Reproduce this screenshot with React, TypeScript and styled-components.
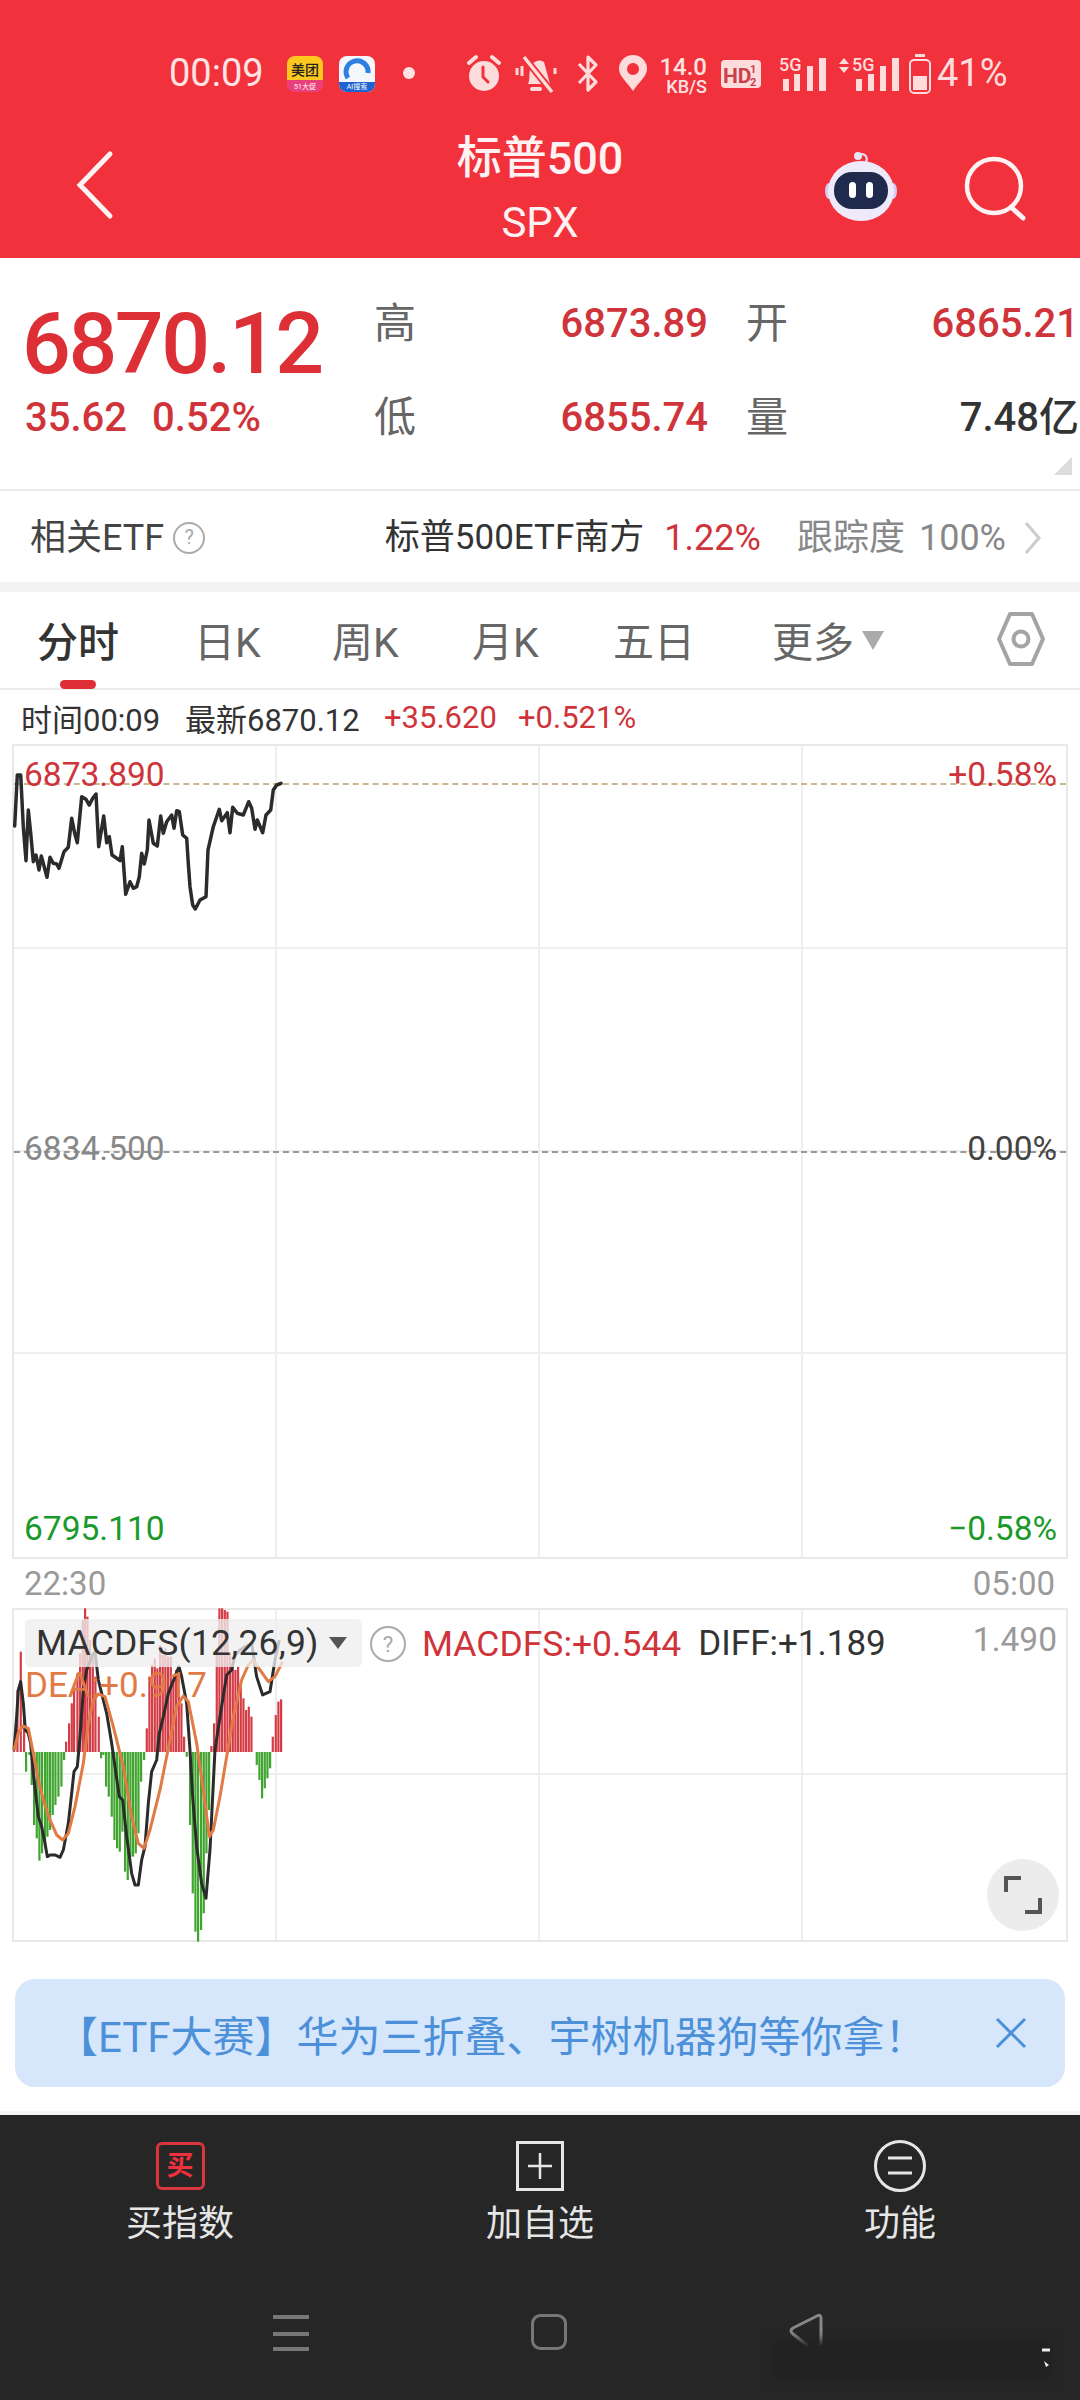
import React from "react";
import styled, { createGlobalStyle } from "styled-components";

const FONT = `Roboto, "Noto Sans CJK SC", sans-serif`;
const RED = "#d0343b";

const Global = createGlobalStyle`
  html, body { margin: 0; padding: 0; background: #fff; }
  body { font-family: ${FONT}; }
  * { box-sizing: border-box; }
`;

const Page = styled.div`
  width: 1080px;
  height: 2400px;
  overflow: hidden;
  display: flex;
  flex-direction: column;
  background: #fff;
  color: #333;
`;

/* ---------- header ---------- */
const Header = styled.header`
  height: 258px;
  background: #f1313b;
  display: flex;
  flex-direction: column;
  flex: none;
`;
const StatusBar = styled.div`
  height: 130px;
  padding: 54px 0 0 169px;
  display: flex;
  align-items: flex-start;
  color: #ffe3e3;
`;
const Clock = styled.span`
  font-size: 38px;
  line-height: 38px;
  width: 118px;
  flex: none;
`;
const Slot = styled.span<{ $w: number; $ml?: number }>`
  display: block;
  flex: none;
  width: ${(p) => p.$w}px;
  margin-left: ${(p) => p.$ml ?? 0}px;
  height: 40px;
  position: relative;
`;
const AppTile = styled.div<{ $bg: string }>`
  width: 36px;
  height: 36px;
  margin-top: 2px;
  border-radius: 8px;
  overflow: hidden;
  background: ${(p) => p.$bg};
  display: flex;
  flex-direction: column;
  align-items: center;
  position: relative;
`;
const TileTop = styled.span`
  font-size: 14px;
  line-height: 15px;
  margin-top: 7px;
  font-weight: 500;
  color: #222;
  white-space: nowrap;
`;
const TileBottom = styled.span<{ $bg: string }>`
  position: absolute;
  left: 0;
  right: 0;
  bottom: 0;
  height: 10px;
  background: ${(p) => p.$bg};
  color: #fff;
  font-size: 7px;
  line-height: 10px;
  text-align: center;
  white-space: nowrap;
`;
const Speed = styled.div`
  display: flex;
  flex-direction: column;
  align-items: flex-end;
  width: 46px;
  flex: none;
  margin-left: 14px;
  padding-top: 2px;
  color: #ffe3e3;
  font-weight: 500;
`;
const SpeedTop = styled.span`
  font-size: 24px;
  line-height: 22px;
`;
const SpeedBottom = styled.span`
  font-size: 18px;
  line-height: 17px;
  white-space: nowrap;
`;
const Battery = styled.span`
  font-size: 38px;
  line-height: 38px;
  margin-left: 6px;
  flex: none;
  color: #ffdcdc;
`;
const NavBar = styled.div`
  height: 128px;
  position: relative;
  display: flex;
  flex-direction: column;
  align-items: center;
  color: #fff2f2;
`;
const NavTitle = styled.div`
  font-size: 45px;
  line-height: 60px;
  margin-top: -1px;
  font-weight: 500;
`;
const NavSub = styled.div`
  font-size: 42px;
  line-height: 50px;
  margin-top: 9px;
`;
const NavIcon = styled.svg<{ $x: number; $y: number }>`
  position: absolute;
  left: ${(p) => p.$x}px;
  top: ${(p) => p.$y}px;
`;

/* ---------- stats ---------- */
const Stats = styled.section`
  height: 233px;
  flex: none;
  border-bottom: 2px solid #ececec;
  display: grid;
  grid-template-columns: 349px 147px 187px 79px 1fr;
  grid-template-rows: 94px 94px;
  padding: 19px 1px 0 25px;
  position: relative;
`;
const BigPrice = styled.div`
  font-size: 86px;
  line-height: 94px;
  margin: 20px 0 -20px -3px;
  font-weight: 500;
  color: #dc2f36;
  letter-spacing: -2.5px;
  white-space: nowrap;
`;
const Change = styled.div`
  font-size: 40px;
  line-height: 94px;
  font-weight: 500;
  color: ${RED};
  display: flex;
  gap: 25px;
`;
const StatKey = styled.div<{ $inset?: number }>`
  font-size: 42px;
  line-height: 94px;
  color: #666;
  padding-left: ${(p) => p.$inset ?? 0}px;
`;
const StatValue = styled.div<{ $dark?: boolean }>`
  font-size: 40px;
  line-height: 94px;
  font-weight: 500;
  color: ${(p) => (p.$dark ? "#333" : RED)};
  text-align: right;
  white-space: nowrap;
`;
const Corner = styled.div`
  position: absolute;
  right: 8px;
  bottom: 14px;
  width: 0;
  height: 0;
  border-left: 18px solid transparent;
  border-bottom: 18px solid #dcdcdc;
`;

/* ---------- ETF row ---------- */
const EtfRow = styled.section`
  height: 91px;
  flex: none;
  display: flex;
  align-items: center;
  padding: 2px 37px 0 30px;
  font-size: 36px;
  line-height: 44px;
  color: #444;
`;
const Help = styled.span<{ $size: number }>`
  width: ${(p) => p.$size}px;
  height: ${(p) => p.$size}px;
  border: 2px solid #aaa;
  border-radius: 50%;
  color: #aaa;
  font-size: ${(p) => p.$size * 0.62}px;
  line-height: ${(p) => p.$size - 4}px;
  text-align: center;
  flex: none;
`;
const EtfHelp = styled(Help)`
  margin-left: 9px;
`;
const EtfName = styled.span`
  margin-left: auto;
  color: #333;
  font-size: 35px;
  line-height: 44px;
`;
const EtfPct = styled.span`
  margin-left: 20px;
  color: ${RED};
  line-height: 44px;
`;
const EtfTrack = styled.span`
  margin-left: 36px;
  color: #888;
  display: flex;
  align-items: baseline;
  gap: 14px;
  line-height: 44px;
`;
const Chevron = styled.svg`
  margin-left: 17px;
  flex: none;
`;
const Band = styled.div`
  height: 10px;
  flex: none;
  background: #f4f4f4;
`;

/* ---------- tabs ---------- */
const Tabs = styled.nav`
  height: 98px;
  flex: none;
  border-bottom: 2px solid #ececec;
  position: relative;
  display: flex;
  align-items: flex-start;
  padding-top: 26px;
  padding-left: 37px;
`;
const Tab = styled.div<{ $active?: boolean; $w: number }>`
  width: ${(p) => p.$w}px;
  flex: none;
  font-size: 41px;
  line-height: 50px;
  color: ${(p) => (p.$active ? "#333" : "#666")};
  font-weight: ${(p) => (p.$active ? 500 : 400)};
  position: relative;
  white-space: nowrap;
  display: flex;
  align-items: center;
  &::after {
    content: "";
    display: ${(p) => (p.$active ? "block" : "none")};
    position: absolute;
    left: 23px;
    top: 62px;
    width: 36px;
    height: 9px;
    border-radius: 5px;
    background: #e12f38;
  }
`;
const MoreCaret = styled.span`
  width: 0;
  height: 0;
  margin-left: 8px;
  margin-top: -6px;
  border-left: 11px solid transparent;
  border-right: 11px solid transparent;
  border-top: 19px solid #aaa;
`;
const Gear = styled.svg`
  position: absolute;
  left: 996px;
  top: 17px;
`;

const InfoRow = styled.div`
  height: 54px;
  flex: none;
  display: flex;
  align-items: center;
  font-size: 31px;
  padding-left: 21px;
  color: #333;
  white-space: nowrap;
`;
const InfoItem = styled.span<{ $w: number; $red?: boolean }>`
  width: ${(p) => p.$w}px;
  flex: none;
  color: ${(p) => (p.$red ? RED : "#333")};
`;

/* ---------- charts ---------- */
const Chart = styled.div<{ $rows: number; $h: number }>`
  margin-left: 12px;
  width: 1056px;
  height: ${(p) => p.$h}px;
  flex: none;
  position: relative;
  border: 2px solid #e8e8e8;
  display: grid;
  grid-template-columns: repeat(4, 1fr);
  grid-template-rows: repeat(${(p) => p.$rows}, 1fr);
`;
const Cell = styled.div<{ $last?: boolean }>`
  border-right: 2px solid #eee;
  border-bottom: ${(p) => (p.$last ? "0" : "2px solid #eee")};
  &:nth-child(4n) { border-right: 0; }
`;
const Overlay = styled.svg`
  position: absolute;
  left: -14px;
  top: -2px;
  overflow: visible;
  pointer-events: none;
`;
const Dashed = styled.div<{ $top: number; $color: string }>`
  position: absolute;
  left: 0;
  right: 0;
  top: ${(p) => p.$top}px;
  border-top: 2px dashed ${(p) => p.$color};
`;
const PriceLabel = styled.div<{ $top: number; $right?: boolean; $color: string }>`
  position: absolute;
  top: ${(p) => p.$top}px;
  ${(p) => (p.$right ? "right: 9px;" : "left: 10px;")}
  font-size: 33.5px;
  line-height: 40px;
  color: ${(p) => p.$color};
`;
const TimeRow = styled.div`
  height: 49px;
  flex: none;
  display: flex;
  justify-content: space-between;
  align-items: center;
  padding: 0 25px 0 24px;
  font-size: 33px;
  color: #9a9a9a;
`;
const MacdBox = styled.div`
  position: absolute;
  left: 11px;
  top: 9px;
  width: 337px;
  height: 48px;
  background: rgba(238, 238, 238, 0.78);
  border-radius: 5px;
  display: flex;
  align-items: center;
  padding-left: 11px;
  font-size: 35.5px;
  letter-spacing: 0.2px;
  color: #333;
  white-space: nowrap;
`;
const MacdCaret = styled.span`
  width: 0;
  height: 0;
  margin-left: 10px;
  border-left: 9px solid transparent;
  border-right: 9px solid transparent;
  border-top: 12px solid #555;
`;
const MacdValues = styled.div`
  position: absolute;
  left: 356px;
  top: 14px;
  display: flex;
  align-items: center;
  font-size: 35.5px;
  line-height: 40px;
  white-space: nowrap;
`;
const MacdRed = styled.span`
  margin-left: 16px;
  color: ${RED};
`;
const MacdDark = styled.span`
  margin-left: 17px;
  font-size: 35px;
  color: #333;
`;
const DeaLabel = styled.div`
  position: absolute;
  left: 11px;
  top: 56px;
  font-size: 35px;
  line-height: 40px;
  color: #e27a45;
  white-space: nowrap;
`;
const Expand = styled.div`
  position: absolute;
  right: 7px;
  bottom: 9px;
  width: 72px;
  height: 72px;
  border-radius: 50%;
  background: #ececec;
  display: flex;
  align-items: center;
  justify-content: center;
`;

/* ---------- banner ---------- */
const Banner = styled.div`
  margin: 37px 15px 0;
  height: 108px;
  flex: none;
  border-radius: 20px;
  background: #d6e7fb;
  display: flex;
  align-items: center;
  padding-left: 41px;
  color: #4d90da;
  font-size: 42px;
  white-space: nowrap;
  position: relative;
`;
const BannerClose = styled.svg`
  position: absolute;
  left: 980px;
  top: 38px;
`;
const Hairline = styled.div`
  margin-top: 24px;
  height: 4px;
  flex: none;
  background: #f5f5f5;
`;

/* ---------- bottom ---------- */
const Bottom = styled.footer`
  flex: 1;
  background: #262626;
  position: relative;
  display: flex;
  flex-direction: column;
`;
const Actions = styled.div`
  display: grid;
  grid-template-columns: repeat(3, 360px);
  padding-top: 24px;
`;
const Action = styled.div`
  display: flex;
  flex-direction: column;
  align-items: center;
  color: #e6e6e6;
  font-size: 36px;
  line-height: 50px;
`;
const ActionIcon = styled.div`
  height: 54px;
  margin-bottom: 6px;
  display: flex;
  align-items: center;
`;
const BuyIcon = styled.div`
  width: 49px;
  height: 48px;
  border: 3px solid #d8353c;
  border-radius: 6px;
  color: #f0303c;
  font-size: 27px;
  font-weight: 700;
  line-height: 42px;
  text-align: center;
`;
const SysNav = styled.div`
  position: absolute;
  left: 0;
  top: 198px;
  width: 100%;
`;
const SysIcon = styled.svg<{ $x: number }>`
  position: absolute;
  left: ${(p) => p.$x}px;
  top: 0;
`;
const Smudge = styled.div`
  position: absolute;
  left: 772px;
  top: 225px;
  width: 282px;
  height: 38px;
  background: #222;
  filter: blur(5px);
`;
const Specks = styled.svg`
  position: absolute;
  left: 1040px;
  top: 232px;
`;

/* ---------- data ---------- */
const pricePts: [number, number][] = [[44,288],[52,135],[62,135],[70,290],[78,392],[85,240],[92,310],[100,395],[108,375],[117,420],[124,378],[141,442],[150,382],[160,400],[170,402],[177,415],[192,365],[205,352],[215,265],[224,310],[232,338],[245,200],[258,208],[268,225],[278,205],[288,192],[296,350],[311,258],[320,338],[328,320],[336,375],[350,385],[360,392],[367,350],[377,493],[390,455],[400,475],[410,470],[418,440],[425,370],[433,402],[442,360],[447,270],[460,340],[472,348],[482,258],[490,310],[500,275],[515,255],[522,295],[530,242],[538,245],[548,315],[560,325],[565,400],[570,470],[578,525],[586,537],[600,510],[618,500],[624,360],[640,290],[658,238],[665,272],[682,248],[690,308],[698,232],[712,250],[730,255],[746,215],[755,235],[765,298],[772,270],[788,308],[798,255],[812,240],[820,180],[830,165],[843,160]];
const pricePath = pricePts.map(([x, y]) => `${(x / 3).toFixed(1)},${(y / 3).toFixed(1)}`).join(" ");

const redBars: [number, number][] = [[42,470],[52,300],[62,185],[72,390],[198,455],[207,400],[215,340],[222,280],[232,250],[240,190],[248,90],[255,55],[262,80],[270,150],[278,200],[286,260],[296,380],[440,415],[448,260],[456,225],[464,205],[472,235],[480,165],[488,195],[496,175],[504,200],[512,200],[520,270],[528,240],[536,300],[544,340],[552,440],[634,468],[642,400],[650,180],[658,55],[666,55],[674,60],[682,65],[690,190],[698,230],[706,240],[714,230],[722,290],[730,325],[738,360],[746,350],[754,380],[818,440],[827,375],[835,335],[843,328]];
const greenBars: [number, number][] = [[78,545],[88,495],[95,585],[102,705],[110,745],[118,812],[126,790],[135,770],[142,740],[150,720],[158,675],[166,645],[175,620],[184,590],[192,510],[303,505],[310,495],[318,590],[326,620],[335,680],[343,750],[351,775],[359,785],[367,725],[375,845],[383,870],[391,800],[399,800],[407,790],[415,730],[423,575],[432,510],[560,500],[570,705],[578,910],[586,1025],[594,1055],[603,1020],[611,970],[619,790],[627,660],[770,525],[778,570],[786,625],[794,595],[802,565],[810,535]];
const diff = "42,480 50,380 55,300 62,275 70,340 76,420 85,430 92,460 100,550 108,620 115,680 125,710 135,760 142,800 150,795 165,795 180,802 190,780 205,700 215,610 222,545 232,530 240,440 250,300 260,240 275,200 285,185 295,270 305,310 320,370 335,460 345,530 358,620 368,630 380,740 395,850 405,885 415,885 425,810 435,770 445,640 455,545 470,510 478,430 490,380 505,310 515,285 525,260 537,230 545,260 560,340 570,480 578,620 590,770 605,880 618,925 630,780 645,480 660,380 680,255 695,240 705,195 720,180 745,165 755,160 770,260 788,315 810,305 825,210 838,150";
const dea = "42,480 55,430 68,408 85,415 100,490 115,570 130,630 150,690 170,735 188,750 205,730 225,650 250,520 265,400 280,330 295,312 315,320 340,410 370,530 395,680 415,760 432,775 450,720 480,600 510,450 530,350 550,318 565,335 590,460 610,600 628,740 640,720 660,620 680,500 700,380 725,270 745,225 760,210 780,240 805,275 825,260 848,215";

const cells = (rows: number) =>
  Array.from({ length: rows * 4 }, (_, i) => <Cell key={i} $last={i >= (rows - 1) * 4} />);

export default function App() {
  return (
    <Page>
      <Global />
      <Header>
        <StatusBar>
          <Clock>00:09</Clock>
          <Slot $w={36}>
            <AppTile $bg="linear-gradient(#ffc81e 0 68%, #e9407c 68%)">
              <TileTop>美团</TileTop>
              <TileBottom $bg="#e9407c">51大促</TileBottom>
            </AppTile>
          </Slot>
          <Slot $w={36} $ml={16}>
            <AppTile $bg="#f4f8fd">
              <svg width="36" height="26" viewBox="0 0 36 26">
                <path d="M9 22 A11 11 0 1 1 29 17" fill="none" stroke="#2f7fe0" strokeWidth="5" />
              </svg>
              <TileBottom $bg="#1f63d0">AI搜索</TileBottom>
            </AppTile>
          </Slot>
          <Slot $w={12} $ml={28}>
            <svg width="12" height="40" viewBox="0 0 12 40"><circle cx="6" cy="19" r="6" fill="#ffe3e3" /></svg>
          </Slot>
          <Slot $w={34} $ml={52}>
            <svg width="34" height="40" viewBox="0 0 34 40">
              <circle cx="17" cy="22" r="15" fill="#ffdcdc" />
              <path d="M16 13 v10 l5 5" fill="none" stroke="#f1313b" strokeWidth="3" strokeLinecap="round" />
              <path d="M2 9 L9 3 M25 3 L32 9" stroke="#ffdcdc" strokeWidth="4" strokeLinecap="round" />
            </svg>
          </Slot>
          <Slot $w={44} $ml={13}>
            <svg width="44" height="40" viewBox="0 0 44 40">
              <path d="M14 30 C16 26 15 20 16 15 C17 8 25 4 30 8 L36 30 Z" fill="#ffdcdc" />
              <path d="M18 35 h8" stroke="#ffdcdc" strokeWidth="4" strokeLinecap="round" />
              <path d="M10 3 L38 38" stroke="#f1313b" strokeWidth="7" />
              <path d="M10 3 L38 38" stroke="#ffdcdc" strokeWidth="3.5" />
              <path d="M3 14 v7 M8 12 v10 M41 14 v6" stroke="#ffdcdc" strokeWidth="3" />
            </svg>
          </Slot>
          <Slot $w={22} $ml={19}>
            <svg width="22" height="40" viewBox="0 0 22 40">
              <path d="M2 10 L19 28 L11 36 V3 L19 11 L2 29" fill="none" stroke="#ffdcdc" strokeWidth="3.2" strokeLinejoin="round" />
            </svg>
          </Slot>
          <Slot $w={28} $ml={20}>
            <svg width="28" height="40" viewBox="0 0 28 40">
              <path fillRule="evenodd" d="M14 37 C8 28 0 22 0 15 A14 14 0 0 1 28 15 C28 22 20 28 14 37 Z M14 9 a6 6 0 1 0 .01 0 Z" fill="#ffdcdc" />
            </svg>
          </Slot>
          <Speed>
            <SpeedTop>14.0</SpeedTop>
            <SpeedBottom>KB/S</SpeedBottom>
          </Speed>
          <Slot $w={40} $ml={14}>
            <svg width="40" height="40" viewBox="0 0 40 40">
              <rect x="0" y="6" width="40" height="28" rx="4" fill="#ffdcdc" />
              <text x="2" y="29" fontSize="21" fontWeight="700" fill="#c9404a" fontFamily="Roboto">HD</text>
              <text x="29" y="19" fontSize="11" fontWeight="700" fill="#c9404a" fontFamily="Roboto">1</text>
              <text x="29" y="32" fontSize="11" fontWeight="700" fill="#c9404a" fontFamily="Roboto">2</text>
            </svg>
          </Slot>
          <Slot $w={48} $ml={18}>
            <svg width="48" height="40" viewBox="0 0 48 40">
              <text x="0" y="17" fontSize="18" fontWeight="500" fill="#ffdcdc" fontFamily="Roboto">5G</text>
              <rect x="4" y="25" width="6" height="12" fill="#ffdcdc" />
              <rect x="15" y="20" width="6" height="17" fill="#ffdcdc" />
              <rect x="28" y="12" width="6" height="25" fill="#ffdcdc" />
              <rect x="40" y="4" width="7" height="33" fill="#ffdcdc" />
            </svg>
          </Slot>
          <Slot $w={60} $ml={12}>
            <svg width="60" height="40" viewBox="0 0 60 40">
              <path d="M5 4 L10 10 H0 Z M5 19 L10 13 H0 Z" fill="#ffdcdc" />
              <text x="13" y="17" fontSize="18" fontWeight="500" fill="#ffdcdc" fontFamily="Roboto">5G</text>
              <rect x="17" y="25" width="6" height="12" fill="#ffdcdc" />
              <rect x="29" y="20" width="6" height="17" fill="#ffdcdc" />
              <rect x="41" y="12" width="6" height="25" fill="#ffdcdc" />
              <rect x="53" y="4" width="7" height="33" fill="#ffdcdc" />
            </svg>
          </Slot>
          <Slot $w={22} $ml={10}>
            <svg width="22" height="40" viewBox="0 0 22 40">
              <rect x="1" y="6" width="20" height="33" rx="4" fill="none" stroke="#ffdcdc" strokeWidth="2" />
              <rect x="6" y="0" width="10" height="3" fill="#ffdcdc" />
              <rect x="4" y="22" width="14" height="14" fill="#ffdcdc" />
            </svg>
          </Slot>
          <Battery>41%</Battery>
        </StatusBar>
        <NavBar>
          <NavTitle>标普500</NavTitle>
          <NavSub>SPX</NavSub>
          <NavIcon $x={75} $y={20} width="40" height="70" viewBox="0 0 40 70">
            <path d="M35 4 L5 35 L35 66" fill="none" stroke="#fff2f2" strokeWidth="5" strokeLinecap="round" strokeLinejoin="miter" />
          </NavIcon>
          <NavIcon $x={822} $y={20} width="78" height="72" viewBox="0 0 78 72">
            <circle cx="36" cy="6" r="4" fill="#e9e4f5" />
            <path d="M39 4 C44 4 46 8 44 12" fill="none" stroke="#e9e4f5" strokeWidth="2" />
            <ellipse cx="7" cy="41" rx="4" ry="8" fill="#d6cdf0" />
            <ellipse cx="71" cy="41" rx="4" ry="8" fill="#d6cdf0" />
            <ellipse cx="39" cy="41" rx="33" ry="30" fill="#efeaf9" />
            <rect x="12" y="22" width="54" height="37" rx="18" fill="#1f2a4c" />
            <rect x="27" y="32" width="7" height="16" rx="3.5" fill="#fff" />
            <rect x="44" y="32" width="7" height="16" rx="3.5" fill="#fff" />
          </NavIcon>
          <NavIcon $x={964} $y={25} width="64" height="66" viewBox="0 0 64 66">
            <circle cx="30" cy="31" r="27" fill="none" stroke="#fff2f2" strokeWidth="4.5" />
            <path d="M48 53 L59 63" stroke="#fff2f2" strokeWidth="5" strokeLinecap="round" />
          </NavIcon>
        </NavBar>
      </Header>

      <Stats>
        <BigPrice>6870.12</BigPrice>
        <StatKey>高</StatKey>
        <StatValue>6873.89</StatValue>
        <StatKey $inset={38}>开</StatKey>
        <StatValue>6865.21</StatValue>
        <Change><span>35.62</span><span>0.52%</span></Change>
        <StatKey>低</StatKey>
        <StatValue>6855.74</StatValue>
        <StatKey $inset={38}>量</StatKey>
        <StatValue $dark>7.48亿</StatValue>
        <Corner />
      </Stats>

      <EtfRow>
        <span>相关ETF</span>
        <EtfHelp $size={32}>?</EtfHelp>
        <EtfName>标普500ETF南方</EtfName>
        <EtfPct>1.22%</EtfPct>
        <EtfTrack><span>跟踪度</span><span>100%</span></EtfTrack>
        <Chevron width="20" height="36" viewBox="0 0 20 36">
          <path d="M3 3 L16 18 L3 33" fill="none" stroke="#ccc" strokeWidth="3" />
        </Chevron>
      </EtfRow>
      <Band />

      <Tabs>
        <Tab $active $w={157}>分时</Tab>
        <Tab $w={138}>日K</Tab>
        <Tab $w={140}>周K</Tab>
        <Tab $w={141}>月K</Tab>
        <Tab $w={159}>五日</Tab>
        <Tab $w={120}>更多<MoreCaret /></Tab>
        <Gear width="50" height="60" viewBox="0 0 50 60">
          <path d="M14 5 H36 L47 30 L36 55 H14 L3 30 Z" fill="none" stroke="#a4a4a4" strokeWidth="4" strokeLinejoin="round" />
          <circle cx="25" cy="30" r="7.5" fill="none" stroke="#a4a4a4" strokeWidth="4" />
        </Gear>
      </Tabs>

      <InfoRow>
        <InfoItem $w={164}>时间00:09</InfoItem>
        <InfoItem $w={199}>最新6870.12</InfoItem>
        <InfoItem $w={134} $red>+35.620</InfoItem>
        <InfoItem $w={120} $red>+0.521%</InfoItem>
      </InfoRow>

      <Chart $rows={4} $h={815}>
        {cells(4)}
        <Dashed $top={37} $color="#c9b88f" />
        <Dashed $top={405} $color="#999" />
        <PriceLabel $top={9} $color={RED}>6873.890</PriceLabel>
        <PriceLabel $top={9} $right $color={RED}>+0.58%</PriceLabel>
        <PriceLabel $top={383} $color="#888">6834.500</PriceLabel>
        <PriceLabel $top={383} $right $color="#444">0.00%</PriceLabel>
        <PriceLabel $top={763} $color="#1a9a2a">6795.110</PriceLabel>
        <PriceLabel $top={763} $right $color="#1a9a2a">−0.58%</PriceLabel>
        <Overlay width="400" height="200" viewBox="0 14 400 200">
          <polyline points={pricePath} fill="none" stroke="#2b2b2b" strokeWidth="3.5" strokeLinejoin="round" strokeLinecap="round" />
        </Overlay>
      </Chart>

      <TimeRow><span>22:30</span><span>05:00</span></TimeRow>

      <Chart $rows={2} $h={334}>
        {cells(2)}
        <Overlay width="300" height="360" viewBox="0 18 300 360">
          {redBars.map(([x, y]) => (
            <rect key={x} x={x / 3 - 1} y={y / 3} width="2.2" height={(486 - y) / 3} fill="#d43c46" />
          ))}
          {greenBars.map(([x, y]) => (
            <rect key={x} x={x / 3 - 1} y={162} width="2.2" height={(y - 486) / 3} fill="#3fa52f" />
          ))}
          <g transform="scale(.3333)">
            <polyline points={diff} fill="none" stroke="#2b2b2b" strokeWidth="9" strokeLinejoin="round" />
            <polyline points={dea} fill="none" stroke="#e27a45" strokeWidth="9" strokeLinejoin="round" />
          </g>
        </Overlay>
        <MacdBox>MACDFS(12,26,9)<MacdCaret /></MacdBox>
        <MacdValues>
          <Help $size={36}>?</Help>
          <MacdRed>MACDFS:+0.544</MacdRed>
          <MacdDark>DIFF:+1.189</MacdDark>
        </MacdValues>
        <DeaLabel>DEA:+0.917</DeaLabel>
        <PriceLabel $top={10} $right $color="#9a9a9a">1.490</PriceLabel>
        <Expand>
          <svg width="40" height="40" viewBox="0 0 40 40">
            <path d="M3 17 V3 H18 M37 23 V37 H22" fill="none" stroke="#555" strokeWidth="4" />
          </svg>
        </Expand>
      </Chart>

      <Banner>
        【ETF大赛】华为三折叠、宇树机器狗等你拿！
        <BannerClose width="32" height="32" viewBox="0 0 32 32">
          <path d="M2 2 L30 30 M30 2 L2 30" stroke="#4d90da" strokeWidth="3" />
        </BannerClose>
      </Banner>
      <Hairline />

      <Bottom>
        <Actions>
          <Action>
            <ActionIcon><BuyIcon>买</BuyIcon></ActionIcon>
            买指数
          </Action>
          <Action>
            <ActionIcon>
              <svg width="48" height="50" viewBox="0 0 48 50">
                <rect x="1.5" y="1.5" width="45" height="47" fill="none" stroke="#e6e6e6" strokeWidth="3" />
                <path d="M24 12 V38 M12 25 H36" stroke="#e6e6e6" strokeWidth="2.5" />
              </svg>
            </ActionIcon>
            加自选
          </Action>
          <Action>
            <ActionIcon>
              <svg width="52" height="52" viewBox="0 0 52 52">
                <circle cx="26" cy="26" r="24.5" fill="none" stroke="#e6e6e6" strokeWidth="3" />
                <path d="M14 18 H38 M14 33 H38" stroke="#e6e6e6" strokeWidth="3" />
              </svg>
            </ActionIcon>
            功能
          </Action>
        </Actions>
        <SysNav>
          <SysIcon $x={272} width="38" height="38" viewBox="0 0 38 38">
            <path d="M1 4 H37 M1 21 H37 M1 36 H37" stroke="#777" strokeWidth="4" />
          </SysIcon>
          <SysIcon $x={530} width="38" height="38" viewBox="0 0 38 38">
            <rect x="2.5" y="2.5" width="33" height="33" rx="8" fill="none" stroke="#777" strokeWidth="3" />
          </SysIcon>
          <SysIcon $x={788} width="38" height="38" viewBox="0 0 38 38">
            <path d="M33 32 V5 Q33 1 29 3 L5 15 Q1 18 5 21 L20 33" fill="none" stroke="#888" strokeWidth="3" strokeLinejoin="round" />
          </SysIcon>
        </SysNav>
        <Smudge />
        <Specks width="12" height="30" viewBox="0 0 12 30">
          <path d="M2 3 H10" stroke="#eee" strokeWidth="3" />
          <path d="M4 14 L9 18 L6 20 Z" fill="#eee" />
        </Specks>
      </Bottom>
    </Page>
  );
}
